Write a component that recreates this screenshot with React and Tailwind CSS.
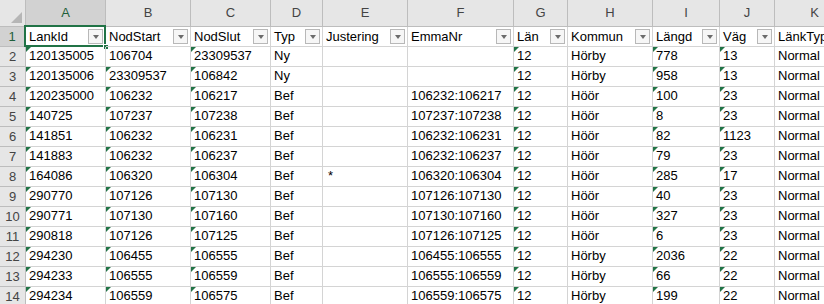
const cols = [
  { key: "A", w: "w-[80px]" },
  { key: "B", w: "w-[85px]" },
  { key: "C", w: "w-[80px]" },
  { key: "D", w: "w-[52px]" },
  { key: "E", w: "w-[85px]" },
  { key: "F", w: "w-[106px]" },
  { key: "G", w: "w-[54px]" },
  { key: "H", w: "w-[85px]" },
  { key: "I", w: "w-[67px]" },
  { key: "J", w: "w-[55px]" },
  { key: "K", w: "w-[80px]" },
];

const headers = ["LankId", "NodStart", "NodSlut", "Typ", "Justering", "EmmaNr", "Län", "Kommun", "Längd", "Väg", "LänkTyp"];

// columns that hold numbers stored as text (green corner marker)
const flagged = [0, 1, 2, 6, 8, 9];

const rows = [
  ["120135005", "106704", "23309537", "Ny", "", "", "12", "Hörby", "778", "13", "Normal"],
  ["120135006", "23309537", "106842", "Ny", "", "", "12", "Hörby", "958", "13", "Normal"],
  ["120235000", "106232", "106217", "Bef", "", "106232:106217", "12", "Höör", "100", "23", "Normal"],
  ["140725", "107237", "107238", "Bef", "", "107237:107238", "12", "Höör", "8", "23", "Normal"],
  ["141851", "106232", "106231", "Bef", "", "106232:106231", "12", "Höör", "82", "1123", "Normal"],
  ["141883", "106232", "106237", "Bef", "", "106232:106237", "12", "Höör", "79", "23", "Normal"],
  ["164086", "106320", "106304", "Bef", "*", "106320:106304", "12", "Höör", "285", "17", "Normal"],
  ["290770", "107126", "107130", "Bef", "", "107126:107130", "12", "Höör", "40", "23", "Normal"],
  ["290771", "107130", "107160", "Bef", "", "107130:107160", "12", "Höör", "327", "23", "Normal"],
  ["290818", "107126", "107125", "Bef", "", "107126:107125", "12", "Höör", "6", "23", "Normal"],
  ["294230", "106455", "106555", "Bef", "", "106455:106555", "12", "Hörby", "2036", "22", "Normal"],
  ["294233", "106555", "106559", "Bef", "", "106555:106559", "12", "Hörby", "66", "22", "Normal"],
  ["294234", "106559", "106575", "Bef", "", "106559:106575", "12", "Hörby", "199", "22", "Normal"],
];

function FilterButton() {
  return (
    <span className="mr-[2px] flex h-[15px] w-[15px] shrink-0 items-center justify-center border border-[#b8b8b8] bg-[#f6f6f6]">
      <span className="h-0 w-0 border-x-[3px] border-t-[4px] border-x-transparent border-t-[#6b6b6b]" />
    </span>
  );
}

function GreenFlag() {
  return <span className="absolute left-0 top-0 h-0 w-0 border-r-[5px] border-t-[5px] border-r-transparent border-t-[#217346]" />;
}

export default function App() {
  return (
    <div className="h-[304px] w-[824px] overflow-hidden bg-white font-['Liberation_Sans',Arial,sans-serif] text-[13px] text-black">
      <div className="flex w-max">
        {/* row header column */}
        <div className="flex w-[26px] shrink-0 flex-col">
          <div className="relative h-[27px] border-b border-r border-[#bdbdbd] bg-[#e6e6e6]">
            <span className="absolute bottom-[3px] right-[3px] h-0 w-0 border-b-[11px] border-l-[11px] border-b-[#b6b6b6] border-l-transparent" />
          </div>
          <div className="flex h-[20px] items-center justify-center border-b border-r-2 border-b-[#bdbdbd] border-r-[#217346] bg-[#d2d2d2] text-[#1f5f3a]">1</div>
          {rows.map((_, i) => (
            <div key={i} className="flex h-[20px] items-center justify-center border-b border-r border-[#bdbdbd] bg-[#e6e6e6] text-[#444]">
              {i + 2}
            </div>
          ))}
        </div>

        {cols.map((c, ci) => (
          <div key={c.key} className={`flex shrink-0 flex-col ${c.w}`}>
            {ci === 0 ? (
              <div className="flex h-[27px] items-center justify-center border-b-2 border-r border-b-[#217346] border-r-[#bdbdbd] bg-[#d2d2d2] text-[#1f5f3a]">
                {c.key}
              </div>
            ) : (
              <div className="flex h-[27px] items-center justify-center border-b border-r border-[#bdbdbd] bg-[#e6e6e6] text-[#444]">
                {c.key}
              </div>
            )}
            <div className="relative flex h-[20px] items-center justify-between border-b border-r border-[#d4d4d4] pl-[3px]">
              <span className="whitespace-nowrap">{headers[ci]}</span>
              {ci < 10 && <FilterButton />}
              {ci === 0 && (
                <>
                  <span className="absolute -left-[2px] -top-[2px] h-[22px] w-[82px] border-2 border-[#217346]" />
                  <span className="absolute -bottom-[4px] -right-[4px] h-[6px] w-[6px] border border-white bg-[#217346]" />
                </>
              )}
            </div>
            {rows.map((r, ri) => (
              <div key={ri} className="relative flex h-[20px] items-end border-b border-r border-[#d4d4d4] pb-[1px] pl-[3px]">
                {flagged.includes(ci) && !(ci === 1 && ri === 0) && <GreenFlag />}
                <span className={ci === 4 ? "whitespace-nowrap pl-[2px]" : "whitespace-nowrap"}>{r[ci]}</span>
              </div>
            ))}
          </div>
        ))}
      </div>
    </div>
  );
}
